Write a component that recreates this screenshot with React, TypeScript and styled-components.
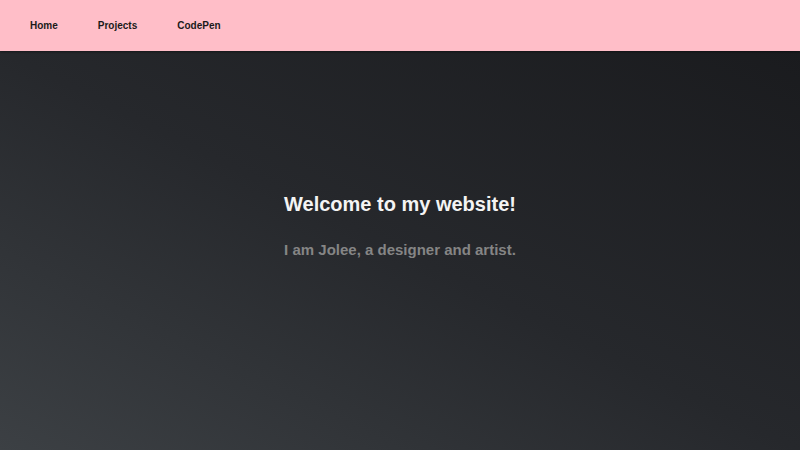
import React from "react";
import styled, { createGlobalStyle } from "styled-components";

const GlobalStyle = createGlobalStyle`
  html, body {
    margin: 0;
    padding: 0;
    height: 100%;
  }
  body {
    font-family: "Liberation Sans", Arial, sans-serif;
    background: #26282b;
  }
  #root {
    height: 100%;
  }
`;

const Page = styled.div`
  display: flex;
  flex-direction: column;
  height: 450px;
`;

const NavBar = styled.nav`
  height: 51px;
  background: #ffbec8;
  display: flex;
  align-items: center;
  padding-left: 10px;
  box-shadow: 0 1px 2px rgba(0, 0, 0, 0.4);
  position: relative;
  z-index: 1;
`;

const NavLink = styled.a`
  padding: 0 20px;
  font-size: 10px;
  font-weight: bold;
  color: #1a1a1a;
  text-decoration: none;
`;

const Hero = styled.main`
  flex: 1;
  background: linear-gradient(to top right, #3c4044 0%, #26282c 50%, #1a1b1e 100%);
  display: flex;
  flex-direction: column;
  align-items: center;
  padding-top: 142px;
`;

const Title = styled.h1`
  margin: 0;
  font-size: 20px;
  color: #f4f4f4;
`;

const Subtitle = styled.h2`
  margin: 25px 0 0;
  font-size: 15px;
  color: #858585;
`;

const links = ["Home", "Projects", "CodePen"];

export default function App() {
  return (
    <>
      <GlobalStyle />
      <Page>
        <NavBar>
          {links.map((l) => (
            <NavLink key={l} href="#">
              {l}
            </NavLink>
          ))}
        </NavBar>
        <Hero>
          <Title>Welcome to my website!</Title>
          <Subtitle>I am Jolee, a designer and artist.</Subtitle>
        </Hero>
      </Page>
    </>
  );
}
